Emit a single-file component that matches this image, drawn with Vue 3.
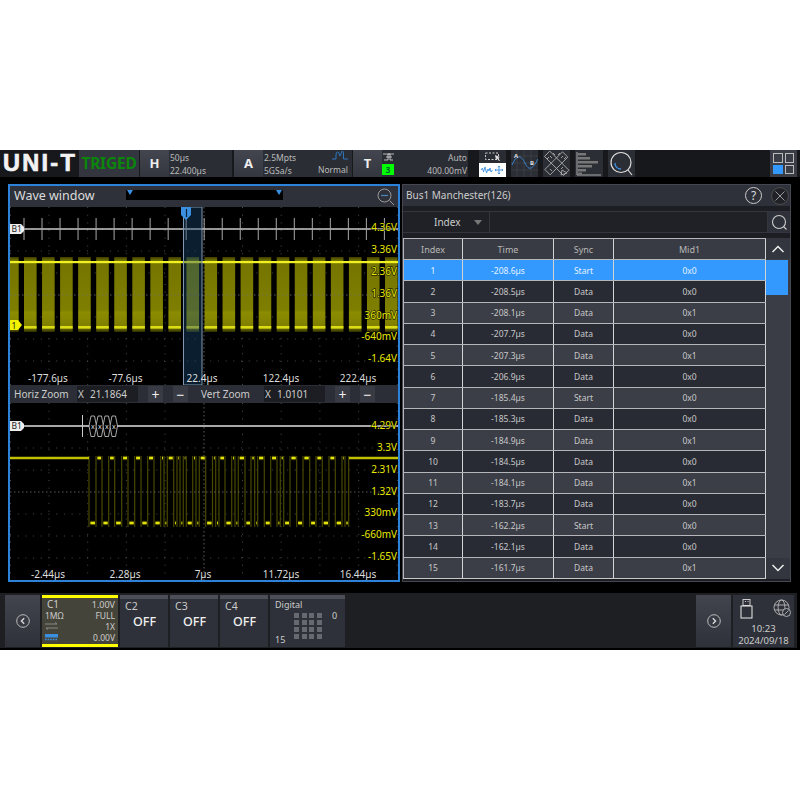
<template>
  <div class="page">
    <div class="scope">
      <!-- top status bar -->
      <header class="topbar">
        <div class="logo">UNI-T</div>
        <div class="trig">TRIGED</div>

        <div class="block block-h">
          <div class="key">H</div>
          <div class="info">
            <span>50µs</span>
            <span>22.400µs</span>
          </div>
        </div>

        <div class="block block-a">
          <div class="key">A</div>
          <div class="info info-split">
            <div class="col">
              <span>2.5Mpts</span>
              <span>5GSa/s</span>
            </div>
            <div class="col col-right">
              <svg width="16" height="9" viewBox="0 0 16 9">
                <path d="M0 8H4V4Q4 1 5.5 1T7.5 4T9.5 1T11.5 4V8H16" fill="none" stroke="#2f7fd0" stroke-width="0.9" />
              </svg>
              <span>Normal</span>
            </div>
          </div>
        </div>

        <div class="block block-t">
          <div class="key">T</div>
          <div class="trig-src">
            <svg width="11" height="9" viewBox="0 0 11 9">
              <path d="M0 2H11M1 8H5V2M5 2H7V8H10M3 5H9" fill="none" stroke="#ddd" stroke-width="0.8" />
            </svg>
            <span class="src-num">3</span>
          </div>
          <div class="info info-end">
            <span>Auto</span>
            <span>400.00mV</span>
          </div>
        </div>

        <div class="tools">
          <div class="tool tool-split">
            <div class="tool-top">
              <svg width="16" height="9" viewBox="0 0 16 9">
                <rect x="0.5" y="1" width="13" height="6.5" fill="none" stroke="#ccc" stroke-dasharray="2 1.5" />
                <path d="M10 3L15 5L12.8 6L15 8.5L14 9L12 6.6L11 8Z" fill="#ddd" />
              </svg>
            </div>
            <div class="tool-bottom">
              <svg width="25" height="10" viewBox="0 0 25 10">
                <path d="M1 5L2.5 3L3.5 7L5 2L6.5 8L8 4L9 6L10 3L11 7L12.5 5" fill="none" stroke="#3a8fe0" stroke-width="0.9" />
                <path d="M19 1V9M15 5H23M19 1L18 2.2M19 1L20 2.2M19 9L18 7.8M19 9L20 7.8M15 5L16.2 4M15 5L16.2 6M23 5L21.8 4M23 5L21.8 6" fill="none" stroke="#3a8fe0" stroke-width="0.9" />
              </svg>
            </div>
          </div>
          <div class="tool">
            <svg width="27" height="27" viewBox="0 0 27 27">
              <path d="M0 13H27M13 0V27M6 0V27M20 0V27M0 6H27M0 20H27" stroke="#4a4d55" stroke-width="0.5" />
              <path d="M1 15C6 4 10 5 14 13S21 20 27 9" fill="none" stroke="#3a8fe0" stroke-width="0.9" />
              <text x="3" y="8" class="tool-letter">A</text>
              <text x="19" y="15" class="tool-letter">B</text>
            </svg>
          </div>
          <div class="tool">
            <svg width="27" height="27" viewBox="0 0 27 27">
              <g fill="none" stroke="#aaa" stroke-width="0.9">
                <rect x="0" y="9.5" width="27" height="7.5" transform="rotate(45 13.5 13.5)" />
                <rect x="1" y="9.5" width="25" height="7.5" transform="rotate(-45 13.5 13.5)" />
                <path d="M4 9L6 7M7 6L9 8M10 3L12 5M15 5L17 3M18 8L20 6M21 9L23 7M7 19L9 21M18 19L20 17" />
                <path d="M19 20L24 23L18 25Z" />
              </g>
            </svg>
          </div>
          <div class="tool tool-hist">
            <svg width="28" height="27" viewBox="0 0 28 27">
              <path d="M2 2V25H26" fill="none" stroke="#aaa" stroke-width="1" />
              <rect x="3" y="3" width="8" height="2.5" fill="#777" />
              <rect x="3" y="7" width="12" height="2.5" fill="#777" />
              <rect x="3" y="11" width="20" height="2.5" fill="#777" />
              <rect x="3" y="15" width="14" height="2.5" fill="#777" />
              <rect x="3" y="19" width="8" height="2.5" fill="#777" />
              <rect x="3" y="22.5" width="4" height="2" fill="#777" />
            </svg>
          </div>
          <div class="tool">
            <svg width="27" height="27" viewBox="0 0 27 27">
              <circle cx="13" cy="12.5" r="10" fill="none" stroke="#ddd" stroke-width="1.2" />
              <path d="M7 13C7 17 10 19 13 19" fill="none" stroke="#3a8fe0" stroke-width="1.4" />
              <path d="M20 20L24 25" stroke="#ddd" stroke-width="1.2" />
            </svg>
          </div>
        </div>

        <div class="layout-btn">
          <i></i><i></i><i class="on"></i><i></i>
        </div>
      </header>

      <div class="main">
        <!-- wave window -->
        <section class="wave">
          <div class="wave-title">
            <span class="wave-name">Wave window</span>
            <div class="overview">
              <b></b>
              <b></b>
            </div>
            <svg class="zoom-out" width="18" height="18" viewBox="0 0 18 18">
              <circle cx="7.5" cy="7.5" r="6.5" fill="none" stroke="#999" stroke-width="1" />
              <path d="M4 7.5H11" stroke="#4d86b8" stroke-width="1.2" />
              <path d="M12.5 12.5L17 17" stroke="#999" stroke-width="1" />
            </svg>
          </div>

          <svg class="plot" width="388" height="178" viewBox="10 207 388 178">
            <defs>
              <linearGradient id="barFill" x1="0" y1="0" x2="0" y2="1">
                <stop offset="0" stop-color="#3c3c00" />
                <stop offset="0.05" stop-color="#757500" />
                <stop offset="0.7" stop-color="#7e7e00" />
                <stop offset="0.74" stop-color="#8c8c06" />
                <stop offset="0.94" stop-color="#7e7e00" />
                <stop offset="1" stop-color="#2c2c00" />
              </linearGradient>
              <filter id="soft" x="-5%" y="-5%" width="110%" height="110%">
                <feGaussianBlur stdDeviation="0.45" />
              </filter>
            </defs>
            <path v-for="y in topGridY" :key="'h' + y" :d="`M10 ${y}H398`" class="grid" />
            <path v-for="x in gridX" :key="'v' + x" :d="`M${x} 207V385`" class="grid" />
            <path d="M204 207V385" class="grid grid-mid" />

            <g filter="url(#soft)">
              <template v-for="x in barX" :key="x">
                <rect :x="x" y="257" :width="x === 10 ? 8.7 : 12.6" height="75" fill="url(#barFill)" />
                <rect :x="x" y="326" :width="x === 10 ? 8.7 : 12.6" height="2.6" fill="#dcdc14" />
              </template>
              <rect x="10" y="261" width="388" height="2.2" fill="#f0f020" />
            </g>
            <path d="M10 295H398" class="grid grid-mid" />

            <path d="M10 229H398" stroke="#c8c8c8" stroke-width="1.6" />
            <path v-for="x in tickX" :key="'t' + x" :d="`M${x} 218V240`" stroke="#a8a8a8" stroke-width="1" />

            <rect x="183.5" y="207" width="18.5" height="178" class="selection" />
            <path d="M181 207H191V215L186 220L181 215Z" fill="#3a8fe0" />
            <path d="M186.5 209V217" stroke="#123" stroke-width="1.2" />

            <path d="M10 224H21L24 227V231L21 234H10Z" fill="#eee" />
            <text x="11.5" y="232" class="tag">B1</text>
            <path d="M8 320H18L22 325L18 330H8Z" fill="#f2f200" />
            <text x="11.5" y="328.5" class="tag">1</text>

            <text v-for="l in topVolts" :key="l.t" x="397" :y="l.y" class="volt">{{ l.t }}</text>
            <text v-for="l in topTimes" :key="l.t" :x="l.x" y="381.5" class="time">{{ l.t }}</text>
          </svg>

          <div class="zoom-bar">
            <div class="zoom-group">
              <span class="zoom-name">Horiz Zoom</span>
              <div class="zoom-input"><em>X</em><span>21.1864</span></div>
              <button class="zoom-btn">+</button>
              <button class="zoom-btn">−</button>
            </div>
            <div class="zoom-group">
              <span class="zoom-name">Vert Zoom</span>
              <div class="zoom-input"><em>X</em><span>1.0101</span></div>
              <button class="zoom-btn">+</button>
              <button class="zoom-btn">−</button>
            </div>
          </div>

          <svg class="plot" width="388" height="177" viewBox="10 403 388 177">
            <path v-for="y in lowGridY" :key="'h' + y" :d="`M10 ${y}H398`" class="grid" />
            <path v-for="x in gridX" :key="'v' + x" :d="`M${x} 403V580`" class="grid" />
            <path d="M204 403V580" class="grid grid-mid" />

            <path d="M10 426H398" stroke="#a8a8a8" stroke-width="2" />
            <path d="M82.5 415V437" stroke="#ccc" stroke-width="1" />
            <path
              v-for="x in bubbleX"
              :key="'b' + x"
              :d="`M${x} 426L${x + 2} 416H${x + 5.5}L${x + 7.5} 426L${x + 5.5} 436.5H${x + 2}Z`"
              fill="#000"
              stroke="#d0d0d0"
              stroke-width="0.8"
            />
            <text v-for="x in bubbleX" :key="'x' + x" :x="x + 3.8" y="429" class="bubble-x">x</text>

            <path :d="edgePath" fill="none" stroke="#484800" stroke-width="1.2" filter="url(#soft)" />
            <g filter="url(#soft)">
              <path :d="levelPath" fill="none" stroke="#6a6a00" stroke-width="4.5" opacity="0.5" />
              <path :d="levelPath" fill="none" stroke="#e4e40c" stroke-width="2.4" />
            </g>
            <path d="M10 458H89M349 458H398" stroke="#c0c000" stroke-width="2.4" />
            <path d="M10 492H398" class="grid grid-mid" />

            <path d="M10 421H21L24 424V428L21 431H10Z" fill="#eee" />
            <text x="11.5" y="429" class="tag">B1</text>

            <text v-for="l in lowVolts" :key="l.t" x="397" :y="l.y" class="volt">{{ l.t }}</text>
            <text v-for="l in lowTimes" :key="l.t" :x="l.x" y="578" class="time">{{ l.t }}</text>
          </svg>
        </section>

        <!-- decode table -->
        <section class="panel">
          <div class="panel-title">
            <span>Bus1 Manchester(126)</span>
            <div class="panel-actions">
              <span class="help">?</span>
              <svg width="18" height="18" viewBox="0 0 18 18">
                <circle cx="9" cy="9" r="8.4" fill="#202227" stroke="#555" stroke-width="0.8" />
                <path d="M4.5 4.5L13.5 13.5M13.5 4.5L4.5 13.5" stroke="#999" stroke-width="1" />
              </svg>
            </div>
          </div>

          <div class="filter">
            <div class="filter-select">
              <span>Index</span>
              <i class="caret"></i>
            </div>
            <div class="filter-input"></div>
            <div class="filter-search">
              <svg width="17" height="17" viewBox="0 0 17 17">
                <circle cx="8" cy="8" r="6.5" fill="none" stroke="#ccc" stroke-width="1.1" />
                <path d="M12.5 12.5L15.5 15.5" stroke="#ccc" stroke-width="1.1" />
              </svg>
            </div>
          </div>

          <div class="table-wrap">
            <div class="table">
              <div class="row row-head">
                <div v-for="h in columns" :key="h" class="cell">{{ h }}</div>
              </div>
              <div
                v-for="(r, i) in rows"
                :key="r[0]"
                class="row"
                :class="{ selected: i === 0, light: i % 2 === 0 && i !== 0 }"
              >
                <div class="cell">{{ i + 1 }}</div>
                <div class="cell">{{ r[0] }}µs</div>
                <div class="cell">{{ r[1] }}</div>
                <div class="cell">{{ r[2] }}</div>
              </div>
            </div>
            <div class="scrollbar">
              <div class="scroll-btn">
                <svg width="14" height="8" viewBox="0 0 14 8">
                  <path d="M1.5 7L7 1.5L12.5 7" fill="none" stroke="#eee" stroke-width="1.5" />
                </svg>
              </div>
              <div class="scroll-track"><div class="scroll-thumb"></div></div>
              <div class="scroll-btn">
                <svg width="14" height="8" viewBox="0 0 14 8">
                  <path d="M1.5 1L7 6.5L12.5 1" fill="none" stroke="#eee" stroke-width="1.5" />
                </svg>
              </div>
            </div>
          </div>
        </section>
      </div>

      <!-- channel dock -->
      <footer class="dock">
        <button class="nav">
          <svg width="14" height="14" viewBox="0 0 14 14">
            <circle cx="7" cy="7" r="6.3" fill="none" stroke="#bbb" stroke-width="1" />
            <path d="M8.2 4.2L5.4 7L8.2 9.8" fill="none" stroke="#ddd" stroke-width="1.3" />
          </svg>
        </button>

        <div class="ch ch-on">
          <div class="ch-line big"><span class="ch-id">C1</span><span>1.00V</span></div>
          <div class="ch-line"><span>1MΩ</span><span>FULL</span></div>
          <div class="ch-line">
            <svg width="13" height="8" viewBox="0 0 13 8">
              <path d="M0 2H12L10 0.5M13 6H1L3 7.5" fill="none" stroke="#888" stroke-width="1" />
            </svg>
            <span>1X</span>
          </div>
          <div class="ch-line">
            <svg width="13" height="7" viewBox="0 0 13 7">
              <rect x="0" y="0" width="13" height="3.5" fill="#3a8fe0" />
              <path d="M0 5.5H13" stroke="#3a8fe0" stroke-width="1.6" stroke-dasharray="1.6 1" />
            </svg>
            <span>0.00V</span>
          </div>
        </div>

        <div v-for="c in offChannels" :key="c" class="ch ch-off">
          <span class="ch-id">{{ c }}</span>
          <span class="off">OFF</span>
        </div>

        <div class="ch ch-digital">
          <span class="digital-name">Digital</span>
          <div class="digital-body">
            <span class="digital-low">15</span>
            <div class="digital-grid"><i v-for="n in 16" :key="n"></i></div>
            <span class="digital-high">0</span>
          </div>
        </div>

        <button class="nav nav-right">
          <svg width="14" height="14" viewBox="0 0 14 14">
            <circle cx="7" cy="7" r="6.3" fill="none" stroke="#bbb" stroke-width="1" />
            <path d="M5.8 4.2L8.6 7L5.8 9.8" fill="none" stroke="#ddd" stroke-width="1.3" />
          </svg>
        </button>

        <div class="status">
          <div class="status-icons">
            <svg width="13" height="20" viewBox="0 0 13 20">
              <rect x="3" y="0.5" width="7" height="6" fill="none" stroke="#ccc" stroke-width="1" />
              <path d="M5 2.5H6M7.5 2.5H8.5" stroke="#ccc" stroke-width="1" />
              <rect x="1" y="7" width="11" height="12" fill="none" stroke="#eee" stroke-width="1" />
            </svg>
            <svg width="18" height="18" viewBox="0 0 18 18">
              <g fill="none" stroke="#bbb" stroke-width="0.9">
                <circle cx="8.5" cy="8.5" r="7.5" />
                <ellipse cx="8.5" cy="8.5" rx="3.4" ry="7.5" />
                <path d="M1.5 6H15.5M1.5 11H15.5" />
              </g>
              <circle cx="13.5" cy="13.5" r="4" fill="#2f323b" stroke="#bbb" stroke-width="0.9" />
              <path d="M11.5 15.5L15.5 11.5" stroke="#bbb" stroke-width="0.9" />
            </svg>
          </div>
          <span>10:23</span>
          <span>2024/09/18</span>
        </div>
      </footer>
    </div>
  </div>
</template>

<script setup>
const gridX = [10.5, 49, 87.7, 126.4, 165.1, 242.5, 281.2, 319.9, 358.6, 397.3]
const topGridY = [229, 251, 273, 317, 339, 361]
const lowGridY = [426, 448, 470, 514, 536, 558]

// decoded bit ticks and the burst bars repeat every 18.05px
const tickX = Array.from({ length: 21 }, (_, i) => 24 + i * 18.02)
const barX = [10, ...Array.from({ length: 21 }, (_, i) => 24 + i * 18.05)]

const topVolts = [
  { t: '4.36V', y: 231 },
  { t: '3.36V', y: 253 },
  { t: '2.36V', y: 275 },
  { t: '1.36V', y: 297 },
  { t: '360mV', y: 319 },
  { t: '-640mV', y: 340 },
  { t: '-1.64V', y: 362 }
]
const topTimes = [
  { t: '-177.6µs', x: 48 },
  { t: '-77.6µs', x: 125.5 },
  { t: '22.4µs', x: 202 },
  { t: '122.4µs', x: 281 },
  { t: '222.4µs', x: 358 }
]
const lowVolts = [
  { t: '4.29V', y: 429 },
  { t: '3.3V', y: 451 },
  { t: '2.31V', y: 473 },
  { t: '1.32V', y: 495 },
  { t: '330mV', y: 516 },
  { t: '-660mV', y: 538 },
  { t: '-1.65V', y: 560 }
]
const lowTimes = [
  { t: '-2.44µs', x: 48 },
  { t: '2.28µs', x: 125 },
  { t: '7µs', x: 203 },
  { t: '11.72µs', x: 281 },
  { t: '16.44µs', x: 358 }
]

const bubbleX = [89, 96, 103, 110]

// falling and rising edges of the zoomed burst, low first
const edges = [
  89, 96, 102, 108.7, 114.7, 121.7, 128, 134.7, 141, 147.7, 154, 160.7, 164, 167.3, 173.7, 177, 180,
  183.3, 186.3, 192.7, 196, 199.3, 205.7, 212.5, 215.7, 219, 225, 231.7, 235, 238.3, 245, 251, 254.7,
  257.7, 264.3, 270.7, 277, 280.3, 283.7, 290, 296.7, 303, 309.7, 316, 322.3, 329, 335.3, 342, 345, 348.7
]
const edgePath = edges.map((x) => `M${x} 456V527`).join('')
const levelPath = edges
  .slice(0, -1)
  .map((x, i) => `M${x + 1.4} ${i % 2 === 0 ? 523 : 458}H${edges[i + 1] - 1}`)
  .join('')

const columns = ['Index', 'Time', 'Sync', 'Mid1']
const rows = [
  ['-208.6', 'Start', '0x0'],
  ['-208.5', 'Data', '0x0'],
  ['-208.1', 'Data', '0x1'],
  ['-207.7', 'Data', '0x0'],
  ['-207.3', 'Data', '0x1'],
  ['-206.9', 'Data', '0x0'],
  ['-185.4', 'Start', '0x0'],
  ['-185.3', 'Data', '0x0'],
  ['-184.9', 'Data', '0x1'],
  ['-184.5', 'Data', '0x0'],
  ['-184.1', 'Data', '0x1'],
  ['-183.7', 'Data', '0x0'],
  ['-162.2', 'Start', '0x0'],
  ['-162.1', 'Data', '0x0'],
  ['-161.7', 'Data', '0x1']
]

const offChannels = ['C2', 'C3', 'C4']
</script>

<style scoped>
.page {
  width: 800px;
  height: 800px;
  padding-top: 150px;
  box-sizing: border-box;
  background: #fff;
  font-family: 'Noto Sans', 'Liberation Sans', sans-serif;
}
.scope {
  height: 500px;
  background: #000;
  display: flex;
  flex-direction: column;
  color: #ccc;
}

/* top bar */
.topbar {
  height: 27px;
  flex-shrink: 0;
  display: flex;
  background: #17181c;
}
.logo {
  width: 79px;
  padding-left: 3px;
  box-sizing: border-box;
  font-family: 'Liberation Sans', sans-serif;
  font-weight: 700;
  font-size: 23.5px;
  line-height: 27px;
  letter-spacing: 2.3px;
  color: #f2f2f2;
  -webkit-text-stroke: 0.7px #f2f2f2;
}
.trig {
  width: 60px;
  background: #33363e;
  color: #0a860a;
  font-weight: 700;
  font-size: 15.5px;
  letter-spacing: -0.2px;
  line-height: 27px;
  text-align: center;
}
.block {
  display: flex;
  margin-left: 1px;
  background: #2a2d34;
}
.block-h {
  width: 92px;
}
.block-a {
  width: 118px;
  margin-left: 2px;
}
.block-t {
  width: 115px;
  margin-left: 1px;
}
.key {
  width: 29px;
  flex-shrink: 0;
  background: linear-gradient(#43464f, #33363e);
  color: #eee;
  font-weight: 700;
  font-size: 13px;
  line-height: 27px;
  text-align: center;
}
.info {
  flex: 1;
  display: flex;
  flex-direction: column;
  justify-content: center;
  padding: 0 1px;
  font-size: 8.5px;
  line-height: 13px;
  color: #bbb;
}
.info-split {
  flex-direction: row;
  justify-content: space-between;
  align-items: center;
  padding: 0 4px 0 1px;
}
.col {
  display: flex;
  flex-direction: column;
}
.col-right {
  align-items: flex-end;
  gap: 3px;
}
.info-end {
  align-items: flex-end;
}
.trig-src {
  width: 12px;
  flex-shrink: 0;
  display: flex;
  flex-direction: column;
  align-items: center;
  justify-content: center;
  gap: 3px;
}
.src-num {
  width: 12px;
  height: 11px;
  background: #0f0;
  color: #063;
  font-size: 8px;
  line-height: 11px;
  font-weight: 700;
  text-align: center;
}
.tools {
  display: flex;
  margin-left: 11px;
}
.tool {
  width: 27px;
  height: 27px;
  margin-right: 5px;
  background: #2c2e35;
}
.tool svg {
  display: block;
}
.tool-split {
  display: flex;
  flex-direction: column;
}
.tool-top {
  height: 13px;
  display: flex;
  align-items: center;
  justify-content: center;
  background: #2a2c33;
}
.tool-bottom {
  height: 14px;
  display: flex;
  align-items: center;
  justify-content: center;
  background: #fff;
}
.tool-hist {
  width: 28px;
  margin-left: 0;
}
.tool-letter {
  font-family: 'Noto Sans', sans-serif;
  font-size: 6px;
  font-weight: 700;
  fill: #ddd;
}
.layout-btn {
  width: 27px;
  height: 27px;
  margin-left: auto;
  margin-right: 3px;
  padding: 3px;
  box-sizing: border-box;
  display: grid;
  grid-template-columns: 1fr 1fr;
  grid-template-rows: 1fr 1fr;
  gap: 2px;
  background: #3a3d45;
}
.layout-btn i {
  border: 1px solid #bbb;
}
.layout-btn .on {
  background: #3399ff;
  border-color: #3399ff;
}

/* main area */
.main {
  flex: 1;
  min-height: 0;
  display: flex;
  padding: 7px 0 0 8px;
  gap: 2px;
  height: 398px;
}
.wave {
  width: 392px;
  height: 398px;
  box-sizing: border-box;
  border: 2px solid #2c82d8;
  display: flex;
  flex-direction: column;
  flex-shrink: 0;
}
.wave-title {
  height: 21px;
  flex-shrink: 0;
  position: relative;
  display: flex;
  align-items: center;
  background: #2e3139;
}
.wave-name {
  margin-left: 4px;
  margin-top: -3px;
  font-size: 12.5px;
  color: #ddd;
}
.overview {
  width: 157px;
  height: 10px;
  margin-top: -4px;
  margin-left: 31px;
  padding: 0 1px;
  box-sizing: border-box;
  display: flex;
  justify-content: space-between;
  background: #000;
}
.overview b {
  width: 0;
  height: 0;
  border: 3px solid transparent;
  border-top: 5px solid #3a8fe0;
  border-bottom: 0;
}
.zoom-out {
  margin-left: auto;
  margin-right: 3px;
}
.plot {
  display: block;
  flex-shrink: 0;
  background: #000;
}
.grid {
  stroke: #4a4a4a;
  stroke-width: 1;
  stroke-dasharray: 1 6.7;
  fill: none;
}
.grid-mid {
  stroke: #6e6e6e;
  stroke-width: 0.8;
  stroke-dasharray: 1.5 2.5;
}
.selection {
  fill: rgba(25, 75, 120, 0.4);
  stroke: #8098b0;
  stroke-width: 1;
}
.tag {
  font-family: 'Noto Sans', sans-serif;
  font-size: 8.5px;
  fill: #222;
}
.volt {
  font-family: 'Noto Sans', sans-serif;
  font-size: 10px;
  fill: #e8e800;
  text-anchor: end;
  paint-order: stroke;
  stroke: rgba(0, 0, 0, 0.75);
  stroke-width: 1.4px;
}
.time {
  font-family: 'Noto Sans', sans-serif;
  font-size: 10px;
  fill: #ddd;
  text-anchor: middle;
}
.bubble-x {
  font-family: 'Noto Sans', sans-serif;
  font-size: 7px;
  fill: #ddd;
  text-anchor: middle;
}
.zoom-bar {
  height: 18px;
  flex-shrink: 0;
  display: flex;
  background: #2b2e36;
}
.zoom-group {
  width: 187px;
  display: flex;
  align-items: center;
}
.zoom-name {
  width: 67px;
  flex-shrink: 0;
  padding-left: 4px;
  box-sizing: border-box;
  font-size: 10px;
  color: #ccc;
  white-space: nowrap;
}
.zoom-input {
  width: 61px;
  height: 16px;
  display: flex;
  align-items: center;
  background: #1c1e23;
  font-size: 10px;
  color: #ccc;
}
.zoom-input em {
  width: 13px;
  padding-left: 1px;
  box-sizing: border-box;
  font-style: normal;
}
.zoom-btn {
  width: 15px;
  height: 16px;
  margin-left: 10px;
  padding: 0;
  border: 0;
  background: #383b43;
  color: #eee;
  font-family: inherit;
  font-size: 14px;
  line-height: 15px;
}

/* decode panel */
.panel {
  width: 389px;
  height: 398px;
  box-sizing: border-box;
  border: 1px solid #44474f;
  background: #1c1e23;
  flex-shrink: 0;
  display: flex;
  flex-direction: column;
}
.panel-title {
  height: 21px;
  flex-shrink: 0;
  display: flex;
  align-items: center;
  justify-content: space-between;
  padding: 0 1px 0 3px;
  background: #2e3139;
  font-size: 10px;
  color: #ccc;
}
.panel-title > span {
  margin-top: -2px;
}
.panel-actions {
  display: flex;
  align-items: center;
  gap: 9px;
}
.help {
  width: 17px;
  height: 17px;
  border: 1px solid #ccc;
  border-radius: 50%;
  box-sizing: border-box;
  font-size: 12px;
  line-height: 15px;
  text-align: center;
  color: #ddd;
}
.filter {
  height: 22px;
  flex-shrink: 0;
  margin-top: 5px;
  display: flex;
  gap: 1px;
  background: #33363e;
  padding: 1px 0;
  box-sizing: border-box;
}
.filter-select {
  width: 86px;
  flex-shrink: 0;
  position: relative;
  padding-left: 31px;
  box-sizing: border-box;
  background: #1f2126;
  font-size: 10px;
  line-height: 20px;
}
.caret {
  position: absolute;
  right: 7px;
  top: 8px;
  width: 0;
  height: 0;
  border: 4px solid transparent;
  border-top: 5px solid #777;
  border-bottom: 0;
}
.filter-input {
  flex: 1;
  background: #1f2126;
}
.filter-search {
  width: 22px;
  flex-shrink: 0;
  display: flex;
  align-items: center;
  justify-content: center;
  background: #2e3139;
}
.table-wrap {
  margin-top: 5px;
  display: flex;
  min-height: 0;
}
.table {
  width: 363px;
  flex-shrink: 0;
  border-bottom: 1px solid #c8c8c8;
}
.row {
  height: 21.25px;
  box-sizing: border-box;
  display: grid;
  grid-template-columns: 60px 91px 60px 152px;
  background: #282b34;
  border-top: 1px solid #b4b6ba;
  font-size: 8.5px;
  color: #c8c8c8;
}
.row.light {
  background: #3b3e47;
}
.row.selected {
  background: #3399ff;
  color: #e6f2ff;
}
.row-head {
  height: 21px;
  background: #383b43;
  color: #b8b8b8;
  font-size: 9px;
}
.cell {
  display: flex;
  align-items: center;
  justify-content: center;
  box-sizing: border-box;
  border-right: 1px solid #d4d4d4;
}
.cell:first-child {
  border-left: 1px solid #b4b6ba;
}
.scrollbar {
  flex: 1;
  display: flex;
  flex-direction: column;
  background: #3a3d45;
}
.scroll-btn {
  height: 21px;
  flex-shrink: 0;
  display: flex;
  align-items: center;
  justify-content: center;
  background: #33363e;
}
.scroll-track {
  flex: 1;
}
.scroll-thumb {
  width: 22px;
  height: 35px;
  margin-top: 1px;
  background: #3399ff;
}

/* dock */
.dock {
  height: 55px;
  flex-shrink: 0;
  margin-top: 11px;
  margin-bottom: 2px;
  width: 797px;
  display: flex;
  align-items: center;
  padding: 0 3px 0 5px;
  box-sizing: border-box;
  background: #1d1f23;
}
.nav {
  width: 35px;
  height: 52px;
  padding: 0;
  border: 0;
  display: flex;
  align-items: center;
  justify-content: center;
  background: linear-gradient(#42454e, #2e3139);
}
.nav-right {
  margin-left: auto;
}
.ch {
  height: 52px;
  box-sizing: border-box;
  margin-left: 2px;
  flex-shrink: 0;
}
.ch-on {
  width: 76px;
  padding: 1px 3px 1px 3px;
  background: #45443a;
  border-top: 3px solid #ff0;
  border-bottom: 3px solid #ff0;
  display: grid;
  grid-template-rows: repeat(4, 11px);
  align-content: space-between;
  font-size: 8.5px;
  line-height: 11px;
}
.ch-line {
  display: flex;
  justify-content: space-between;
  align-items: center;
}
.big {
  padding-left: 2px;
  font-size: 9px;
}
.big .ch-id {
  font-size: 10px;
}
.ch-off {
  width: 48px;
  display: flex;
  flex-direction: column;
  background: #2e3139;
  border-top: 4px solid #4b4e56;
  font-size: 10.5px;
  line-height: 14px;
  padding-left: 5px;
}
.ch-off .off {
  margin-top: 2px;
  margin-left: 8px;
  color: #f0f0f0;
  font-size: 12.5px;
  font-weight: 500;
}
.ch-digital {
  width: 75px;
  background: #2e3139;
  border-top: 4px solid #4b4e56;
  padding: 0 5px;
  font-size: 9px;
  line-height: 11px;
  display: flex;
  flex-direction: column;
}
.digital-body {
  flex: 1;
  display: flex;
}
.digital-low {
  width: 10px;
  align-self: flex-end;
  margin-bottom: 2px;
}
.digital-high {
  margin-top: 0;
  margin-left: 8px;
}
.digital-grid {
  width: 30px;
  height: 27px;
  margin-left: 9px;
  margin-top: 3px;
  display: grid;
  grid-template-columns: repeat(4, 5px);
  grid-template-rows: repeat(4, 5px);
  gap: 2.3px 2.5px;
}
.digital-grid i {
  background: #666970;
}
.status {
  width: 61px;
  height: 52px;
  margin-left: 2px;
  flex-shrink: 0;
  display: flex;
  flex-direction: column;
  align-items: center;
  background: #2e3139;
  font-size: 9.5px;
  line-height: 12px;
  color: #ccc;
}
.status-icons {
  width: 100%;
  height: 28px;
  padding: 4px 3px 0 7px;
  box-sizing: border-box;
  display: flex;
  justify-content: space-between;
  align-items: flex-start;
}
</style>
